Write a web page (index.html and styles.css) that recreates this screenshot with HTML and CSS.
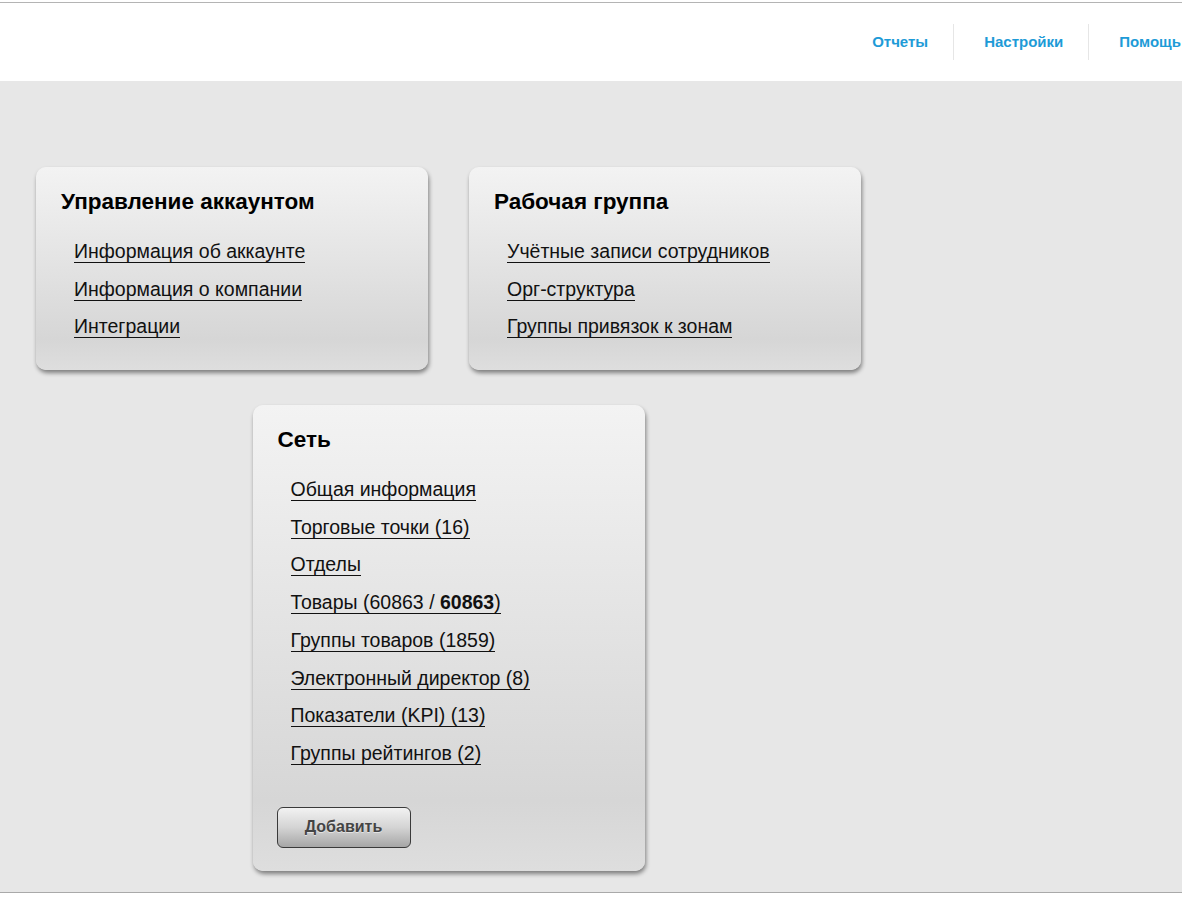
FILE: index.html
```html
<!DOCTYPE html>
<html lang="ru">
<head>
  <meta charset="UTF-8">
  <meta name="viewport" content="width=device-width, initial-scale=1.0">
  <title>Настройки</title>
  <link rel="stylesheet" href="styles.css">
</head>
<body>
  <div class="header">
    <ul class="top-menu">
      <li><a href="#">Отчеты</a></li>
      <li><a href="#">Настройки</a></li>
      <li><a href="#">Помощь</a></li>
    </ul>
  </div>

  <div class="content">
    <div class="blocks">
      <div class="block">
        <h3>Управление аккаунтом</h3>
        <ul>
          <li><a href="#">Информация об аккаунте</a></li>
          <li><a href="#">Информация о компании</a></li>
          <li><a href="#">Интеграции</a></li>
        </ul>
      </div>

      <div class="block">
        <h3>Рабочая группа</h3>
        <ul>
          <li><a href="#">Учётные записи сотрудников</a></li>
          <li><a href="#">Орг-структура</a></li>
          <li><a href="#">Группы привязок к зонам</a></li>
        </ul>
      </div>

      <div class="block block-net">
        <h3>Сеть</h3>
        <ul>
          <li><a href="#">Общая информация</a></li>
          <li><a href="#">Торговые точки (16)</a></li>
          <li><a href="#">Отделы</a></li>
          <li><a href="#">Товары (60863 / <b>60863</b>)</a></li>
          <li><a href="#">Группы товаров (1859)</a></li>
          <li><a href="#">Электронный директор (8)</a></li>
          <li><a href="#">Показатели (KPI) (13)</a></li>
          <li><a href="#">Группы рейтингов (2)</a></li>
        </ul>
        <button class="add-btn">Добавить</button>
      </div>
    </div>
  </div>

  <div class="footer"></div>
</body>
</html>
```

FILE: styles.css
```css
body {
  font-family: 'Liberation Sans', Arial, sans-serif;
  margin: 0;
  padding-top: 2px;
  background-color: #fff;
  overflow: hidden;
}

.header {
  height: 78px;
  border-top: 1px solid #b4b4b4;
  background-color: #fff;
  display: flex;
  justify-content: flex-end;
}

.top-menu {
  list-style: none;
  margin: 0 -24px 0 0;
  padding: 0;
  display: flex;
  align-items: center;
}

.top-menu li {
  border-left: 1px solid #e6e6e6;
  padding: 0 25px 0 30px;
  height: 36px;
  line-height: 35px;
}

.top-menu li:first-child {
  border-left: none;
}

.top-menu a {
  color: #1e9bd7;
  font-size: 15px;
  font-weight: bold;
  text-decoration: none;
}

.content {
  background-color: #e7e7e7;
  height: 812px;
  border-bottom: 1px solid #a9a9a9;
  padding: 86px 0 0 36px;
  box-sizing: border-box;
}

.blocks {
  width: 825px;
  display: flex;
  flex-wrap: wrap;
  justify-content: center;
  column-gap: 41px;
  row-gap: 35px;
}

.block {
  width: 392px;
  box-sizing: border-box;
  padding: 22px 25px 24px 25px;
  border-radius: 10px;
  background: linear-gradient(to bottom, #f3f3f3 0%, #e4e4e4 45%, #d6d6d6 85%, #dedede 100%);
  box-shadow: 1px 3px 4px rgba(0, 0, 0, 0.45);
}

.block-net {
  padding-bottom: 23px;
}

.block h3 {
  margin: 0;
  font-size: 22.5px;
  line-height: 25px;
  color: #000;
}

.block ul {
  list-style: none;
  margin: 19px 0 0 0;
  padding: 0 0 0 13px;
}

.block li {
  height: 37.7px;
  line-height: 37.7px;
}

.block a {
  color: #111;
  font-size: 19.5px;
  text-decoration: none;
  border-bottom: 1px solid #111;
}

.add-btn {
  display: block;
  margin-top: 34px;
  margin-left: -1px;
  width: 134px;
  height: 41px;
  font-family: 'Liberation Sans', Arial, sans-serif;
  font-size: 16px;
  font-weight: bold;
  color: #444;
  text-shadow: 0 1px 0 rgba(255, 255, 255, 0.5);
  border: 1px solid #3a3a3a;
  border-radius: 6px;
  background: linear-gradient(to bottom, #f2f2f2 0%, #d4d4d4 50%, #a6a6a6 100%);
  cursor: pointer;
}

.footer {
  height: 8px;
  background-color: #fff;
}
```
